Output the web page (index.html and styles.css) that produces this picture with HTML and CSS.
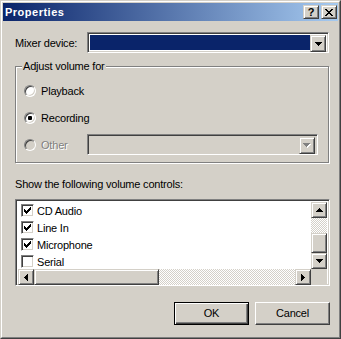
FILE: index.html
```html
<!DOCTYPE html>
<html>
<head>
<meta charset="utf-8">
<link rel="stylesheet" href="styles.css">
</head>
<body>
<div class="window">
  <div class="frame">
    <div class="titlebar">
      <span class="title">Properties</span>
      <div class="tbtns">
        <div class="tbtn raised2"><span class="qmark">?</span></div>
        <div class="tbtn raised2">
          <svg width="8" height="7" viewBox="0 0 8 7" shape-rendering="crispEdges"><path d="M0 0h2v1h-2zM6 0h2v1h-2zM1 1h2v1h-2zM5 1h2v1h-2zM2 2h4v1h-4zM3 3h2v1h-2zM2 4h4v1h-4zM1 5h2v1h-2zM5 5h2v1h-2zM0 6h2v1h-2zM6 6h2v1h-2z" fill="#000"/></svg>
        </div>
      </div>
    </div>
    <div class="client">
      <div class="mixer-row">
        <span class="lbl">Mixer device:</span>
        <div class="combo sunken mixer-combo">
          <div class="combo-field selected"></div>
          <div class="dd-btn raised2">
            <svg width="7" height="4" viewBox="0 0 7 4" shape-rendering="crispEdges"><path d="M0 0h7v1h-7zM1 1h5v1h-5zM2 2h3v1h-3zM3 3h1v1h-1z" fill="#000"/></svg>
          </div>
        </div>
      </div>

      <div class="group">
        <span class="legend">Adjust volume for</span>
        <div class="radio-row">
          <span class="radio"></span><span class="rlabel">Playback</span>
        </div>
        <div class="radio-row">
          <span class="radio"><span class="dot"></span></span><span class="rlabel">Recording</span>
        </div>
        <div class="radio-row other-row">
          <span class="radio-cell">
            <span class="radio disabled"></span><span class="rlabel dis">Other</span>
          </span>
          <div class="combo sunken other-combo">
            <div class="combo-field"></div>
            <div class="dd-btn raised2">
              <svg width="8" height="5" viewBox="0 0 8 5" shape-rendering="crispEdges"><path d="M1 1h7v1h-7zM2 2h5v1h-5zM3 3h3v1h-3zM4 4h1v1h-1z" fill="#fff"/><path d="M0 0h7v1h-7zM1 1h5v1h-5zM2 2h3v1h-3zM3 3h1v1h-1z" fill="#808080"/></svg>
            </div>
          </div>
        </div>
      </div>

      <div class="show-lbl">Show the following volume controls:</div>

      <div class="listbox sunken">
        <div class="items">
          <div class="item"><span class="cb"><svg width="7" height="7" viewBox="0 0 7 7" shape-rendering="crispEdges"><path d="M6 0h1v3h-1zM5 1h1v3h-1zM4 2h1v3h-1zM3 3h1v3h-1zM2 4h1v3h-1zM1 3h1v3h-1zM0 2h1v3h-1z" fill="#000"/></svg></span><span>CD Audio</span></div>
          <div class="item"><span class="cb"><svg width="7" height="7" viewBox="0 0 7 7" shape-rendering="crispEdges"><path d="M6 0h1v3h-1zM5 1h1v3h-1zM4 2h1v3h-1zM3 3h1v3h-1zM2 4h1v3h-1zM1 3h1v3h-1zM0 2h1v3h-1z" fill="#000"/></svg></span><span>Line In</span></div>
          <div class="item"><span class="cb"><svg width="7" height="7" viewBox="0 0 7 7" shape-rendering="crispEdges"><path d="M6 0h1v3h-1zM5 1h1v3h-1zM4 2h1v3h-1zM3 3h1v3h-1zM2 4h1v3h-1zM1 3h1v3h-1zM0 2h1v3h-1z" fill="#000"/></svg></span><span>Microphone</span></div>
          <div class="item"><span class="cb"></span><span>Serial</span></div>
        </div>
        <div class="vscroll">
          <div class="sbtn raised2"><svg width="7" height="4" viewBox="0 0 7 4" shape-rendering="crispEdges"><path d="M3 0h1v1h-1zM2 1h3v1h-3zM1 2h5v1h-5zM0 3h7v1h-7z" fill="#000"/></svg></div>
          <div class="track vtrack1"></div>
          <div class="thumb raised2 vthumb"></div>
          <div class="sbtn raised2"><svg width="7" height="4" viewBox="0 0 7 4" shape-rendering="crispEdges"><path d="M0 0h7v1h-7zM1 1h5v1h-5zM2 2h3v1h-3zM3 3h1v1h-1z" fill="#000"/></svg></div>
        </div>
        <div class="hscroll">
          <div class="sbtn raised2"><svg width="4" height="7" viewBox="0 0 4 7" shape-rendering="crispEdges"><path d="M0 3h1v1h-1zM1 2h1v3h-1zM2 1h1v5h-1zM3 0h1v7h-1z" fill="#000"/></svg></div>
          <div class="thumb raised2 hthumb"></div>
          <div class="track htrack"></div>
          <div class="sbtn raised2"><svg width="4" height="7" viewBox="0 0 4 7" shape-rendering="crispEdges"><path d="M0 0h1v7h-1zM1 1h1v5h-1zM2 2h1v3h-1zM3 3h1v1h-1z" fill="#000"/></svg></div>
        </div>
        <div class="corner"></div>
      </div>

      <div class="buttons">
        <div class="btn default"><span class="btn-in">OK</span></div>
        <div class="btn"><span class="btn-in">Cancel</span></div>
      </div>
    </div>
  </div>
</div>
</body>
</html>
```

FILE: styles.css
```css
html, body {
  margin: 0;
  padding: 0;
  background: #d4d0c8;
}
body {
  font-family: "Liberation Sans", Arial, sans-serif;
  font-size: 11px;
  letter-spacing: -0.2px;
  color: #000;
}
.window {
  width: 341px;
  height: 339px;
  box-sizing: border-box;
  border: 1px solid;
  border-color: #d4d0c8 #404040 #404040 #d4d0c8;
  background: #d4d0c8;
}
.frame {
  height: 100%;
  box-sizing: border-box;
  border: 1px solid;
  border-color: #fff #808080 #808080 #fff;
  padding: 1px;
}
.titlebar {
  height: 18px;
  display: flex;
  align-items: center;
  justify-content: space-between;
  background: linear-gradient(to right, #0a246a, #a6caf0);
  padding: 0 1px 0 2px;
}
.title {
  color: #fff;
  font-weight: bold;
  font-size: 11px;
  letter-spacing: 0.5px;
  line-height: 18px;
}
.tbtns {
  display: flex;
  gap: 2px;
}
.raised2 {
  box-sizing: border-box;
  border: 1px solid;
  border-color: #d4d0c8 #404040 #404040 #d4d0c8;
  box-shadow: inset 1px 1px #fff, inset -1px -1px #808080;
  background: #d4d0c8;
}
.sunken {
  box-sizing: border-box;
  border: 1px solid;
  border-color: #808080 #fff #fff #808080;
  box-shadow: inset 1px 1px #404040, inset -1px -1px #d4d0c8;
}
.tbtn {
  width: 16px;
  height: 14px;
  display: flex;
  align-items: center;
  justify-content: center;
}
.qmark {
  font-weight: bold;
  font-size: 11px;
  line-height: 11px;
  letter-spacing: 0;
  margin-top: 1px;
}
.client {
  padding: 11px 8px 0 12px;
}
.mixer-row {
  display: flex;
  align-items: center;
  height: 21px;
}
.lbl {
  width: 72px;
}
.combo {
  display: flex;
  height: 21px;
  padding: 2px;
}
.mixer-combo {
  width: 242px;
  background: #fff;
}
.combo-field {
  flex: 1;
}
.combo-field.selected {
  background: #0a246a;
}
.dd-btn {
  width: 16px;
  height: 17px;
  display: flex;
  align-items: center;
  justify-content: center;
}
.group {
  position: relative;
  margin-top: 13px;
  margin-right: 1px;
  border: 1px solid #808080;
  box-shadow: inset 1px 1px #fff, 1px 1px #fff;
  padding: 13px 10px 7px 8px;
  display: flex;
  flex-direction: column;
  gap: 6px;
}
.legend {
  position: absolute;
  top: -7px;
  left: 6px;
  padding: 0 1px;
  background: #d4d0c8;
  line-height: 13px;
}
.radio-row {
  height: 21px;
  display: flex;
  align-items: center;
}
.radio {
  width: 12px;
  height: 12px;
  box-sizing: border-box;
  border-radius: 50%;
  border: 1px solid;
  border-color: #808080 #fff #fff #808080;
  box-shadow: inset 1px 1px #404040, inset -1px -1px #d4d0c8;
  background: #fff;
  display: flex;
  align-items: center;
  justify-content: center;
  flex: none;
}
.radio.disabled {
  background: #d4d0c8;
}
.dot {
  width: 4px;
  height: 4px;
  background: #000;
  border-radius: 1px;
}
.rlabel {
  margin-left: 5px;
}
.dis {
  color: #808080;
  text-shadow: 1px 1px 0 #fff;
}
.radio-cell {
  width: 63px;
  display: flex;
  align-items: center;
}
.other-combo {
  width: 231px;
  background: #d4d0c8;
}
.show-lbl {
  margin-top: 15px;
  line-height: 13px;
}
.listbox {
  margin-top: 8px;
  height: 87px;
  padding: 2px;
  background: #fff;
  display: grid;
  grid-template-columns: 1fr 16px;
  grid-template-rows: 67px 16px;
}
.items {
  overflow: hidden;
}
.item {
  height: 17px;
  display: flex;
  align-items: center;
  padding-left: 3px;
}
.cb {
  width: 13px;
  height: 13px;
  box-sizing: border-box;
  border: 1px solid;
  border-color: #808080 #fff #fff #808080;
  box-shadow: inset 1px 1px #404040, inset -1px -1px #d4d0c8;
  background: #fff;
  margin-right: 3px;
  display: flex;
  align-items: center;
  justify-content: center;
  flex: none;
}
.vscroll {
  display: flex;
  flex-direction: column;
}
.hscroll {
  display: flex;
}
.sbtn {
  width: 16px;
  height: 16px;
  flex: none;
  display: flex;
  align-items: center;
  justify-content: center;
}
.track {
  background: repeating-conic-gradient(#fff 0 25%, #d4d0c8 0 50%) 0 0 / 2px 2px;
}
.vtrack1 {
  height: 15px;
}
.vthumb {
  height: 20px;
}
.hthumb {
  width: 125px;
  flex: none;
}
.htrack {
  flex: 1;
}
.corner {
  background: #d4d0c8;
}
.buttons {
  margin-top: 16px;
  display: flex;
  justify-content: flex-end;
  gap: 6px;
}
.btn {
  width: 75px;
  height: 23px;
  box-sizing: border-box;
  border: 1px solid;
  border-color: #fff #404040 #404040 #fff;
  box-shadow: inset -1px -1px #808080;
  display: flex;
  align-items: center;
  justify-content: center;
}
.btn.default {
  border: 1px solid #000;
  box-shadow: inset 1px 1px #fff, inset -1px -1px #404040, inset -2px -2px #808080;
}
.btn-in {
  line-height: 13px;
}
```
